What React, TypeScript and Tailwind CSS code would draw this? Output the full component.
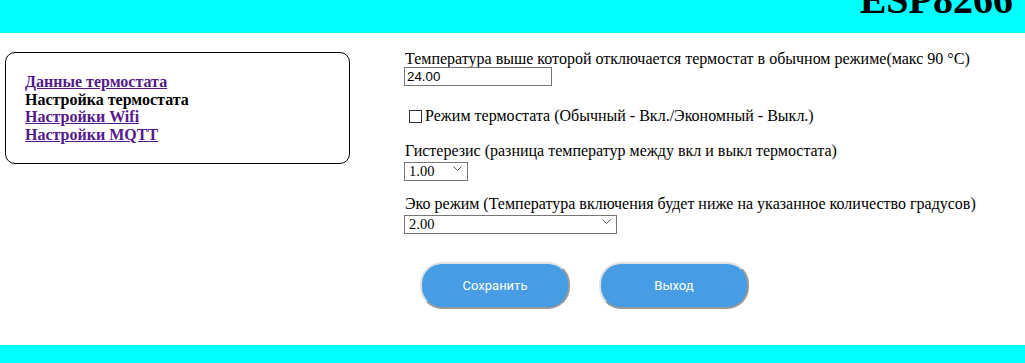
import React from "react";

function Chevron() {
  return (
    <svg width="9" height="5" viewBox="0 0 9 5" className="absolute right-[6px] top-[7px] pointer-events-none">
      <path d="M0.5 0.5 L4.5 4.5 L8.5 0.5" fill="none" stroke="#555" strokeWidth="1" />
    </svg>
  );
}

function Select({ value, width }: { value: string; width: string }) {
  return (
    <div className={`relative h-[19px] ${width}`}>
      <select
        defaultValue={value}
        className="appearance-none w-full h-full border border-[#767676] bg-white pl-[4px] text-[14.5px] leading-[17px] text-black rounded-none outline-none"
        style={{ fontFamily: '"Liberation Serif", serif' }}
      >
        <option>{value}</option>
      </select>
      <Chevron />
    </div>
  );
}

export default function App() {
  return (
    <div
      className="w-[1025px] h-[363px] flex flex-col bg-white text-black overflow-hidden"
      style={{ fontFamily: '"Liberation Serif", "Times New Roman", serif' }}
    >
      <header className="h-[33px] shrink-0 bg-[#00ffff] overflow-hidden flex justify-end pr-[12px]">
        <h1 className="text-[40px] leading-[40px] font-bold -mt-[20px]">ESP8266</h1>
      </header>

      <main className="flex-1 flex items-start">
        <nav className="ml-[5px] mt-[19px] w-[345px] h-[112px] border border-black rounded-[10px] pl-[19px] pt-[20px] text-[16px] leading-[17.7px] font-bold flex flex-col items-start">
          <a href="#" className="text-[#551a8b] underline">Данные термостата</a>
          <span>Настройка термостата</span>
          <a href="#" className="text-[#551a8b] underline">Настройки Wifi</a>
          <a href="#" className="text-[#551a8b] underline">Настройки MQTT</a>
        </nav>

        <form className="ml-[54px] mt-[17px] flex flex-col items-start text-[16px]">
          <label className="block pl-[1px] leading-[17px]">
            Температура выше которой отключается термостат в обычном режиме(макс 90 °C)
          </label>
          <input
            type="text"
            defaultValue="24.00"
            className="block w-[148px] h-[19px] border border-[#767676] px-[2px] text-[13.33px] leading-[17px] outline-none"
            style={{ fontFamily: '"Liberation Sans", Arial, sans-serif' }}
          />

          <label className="mt-[21px] flex items-center leading-[18px] h-[18px]">
            <span className="ml-[5px] mr-[3px] w-[13px] h-[13px] border border-[#333] bg-white inline-block"></span>
            Режим термостата (Обычный - Вкл./Экономный - Выкл.)
          </label>

          <label className="mt-[17px] block pl-[1px] leading-[17px]">
            Гистерезис (разница температур между вкл и выкл термостата)
          </label>
          <Select value="1.00" width="w-[64px]" />

          <label className="mt-[17px] block pl-[1px] leading-[17px]">
            Эко режим (Температура включения будет ниже на указанное количество градусов)
          </label>
          <Select value="2.00" width="w-[213px]" />

          <div className="mt-[31px] ml-[16px] flex gap-[29px]">
            <button
              type="button"
              className="w-[150px] h-[47px] rounded-[22px] bg-[#479de4] text-white text-[13px] border-2 border-solid border-t-[#e2e2e2] border-l-[#e2e2e2] border-b-[#9a9a9a] border-r-[#9a9a9a]"
              style={{ fontFamily: 'Roboto, "Open Sans", sans-serif' }}
            >
              Сохранить
            </button>
            <button
              type="button"
              className="w-[150px] h-[47px] rounded-[22px] bg-[#479de4] text-white text-[13px] border-2 border-solid border-t-[#e2e2e2] border-l-[#e2e2e2] border-b-[#9a9a9a] border-r-[#9a9a9a]"
              style={{ fontFamily: 'Roboto, "Open Sans", sans-serif' }}
            >
              Выход
            </button>
          </div>
        </form>
      </main>

      <footer className="h-[18px] shrink-0 bg-[#00ffff]"></footer>
    </div>
  );
}
